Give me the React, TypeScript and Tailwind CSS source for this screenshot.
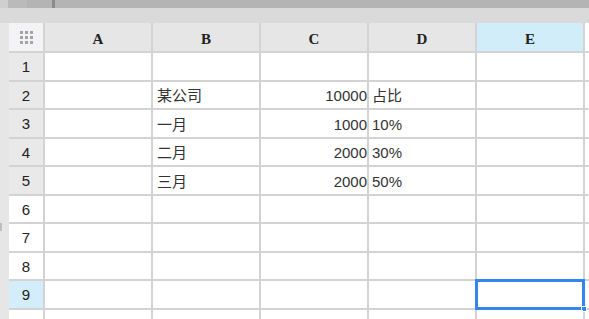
const cols = ["A", "B", "C", "D", "E"];

type Row = { n: number; cells: string[]; shade: string };

const rows: Row[] = [
  { n: 1, cells: ["", "", "", "", ""], shade: "bg-[#e9e9e9]" },
  { n: 2, cells: ["", "某公司", "10000", "占比", ""], shade: "bg-[#e9e9e9]" },
  { n: 3, cells: ["", "一月", "1000", "10%", ""], shade: "bg-[#e9e9e9]" },
  { n: 4, cells: ["", "二月", "2000", "30%", ""], shade: "bg-[#e9e9e9]" },
  { n: 5, cells: ["", "三月", "2000", "50%", ""], shade: "bg-[#e9e9e9]" },
  { n: 6, cells: ["", "", "", "", ""], shade: "bg-white" },
  { n: 7, cells: ["", "", "", "", ""], shade: "bg-white" },
  { n: 8, cells: ["", "", "", "", ""], shade: "bg-white" },
  { n: 9, cells: ["", "", "", "", ""], shade: "bg-[#d3eefa]" },
  { n: 10, cells: ["", "", "", "", ""], shade: "bg-white" },
];

const font = { fontFamily: '"Liberation Sans", "Noto Sans CJK SC", sans-serif' };

function GridDots() {
  return (
    <div className="grid grid-cols-3 gap-[2px]">
      {Array.from({ length: 9 }).map((_, i) => (
        <div key={i} className="w-[3px] h-[3px] bg-[#a3a3a3]" />
      ))}
    </div>
  );
}

export default function App() {
  return (
    <div className="w-[589px] h-[319px] overflow-hidden bg-[#e6e6e6] flex flex-col" style={font}>
      {/* window chrome */}
      <div className="h-[8px] shrink-0 bg-[#b4b4b4] flex">
        <div className="w-[8px] bg-[#cfcfcf]" />
        <div className="w-[19px] bg-[#bababa]" />
        <div className="w-[25px]" />
        <div className="w-[3px] bg-[#8c8c8c]" />
      </div>
      <div className="h-[15px] shrink-0 bg-[#dadada]" />

      <div className="flex flex-1 min-h-0">
        <div className="w-[9px] shrink-0 bg-[#e6e6e6] flex flex-col">
          <div className="h-[200px]" />
          <div className="w-[2px] h-[8px] bg-[#bdbdbd]" />
        </div>

        <div className="grid grid-cols-[34px_repeat(5,106px)_1fr] auto-rows-[26.5px] grid-rows-[28px] gap-[2px] bg-[#d3d3d3] flex-1 content-start">
          <div className="bg-[#f3f3f5] flex items-center justify-center">
            <GridDots />
          </div>
          {cols.map((c) => (
            <div
              key={c}
              className={`${c === "E" ? "bg-[#d1edfa]" : "bg-[#e6e6e6]"} flex items-center justify-center pt-[5px] text-[15px] font-bold text-[#222]`}
              style={{ fontFamily: '"Liberation Serif", serif' }}
            >
              {c}
            </div>
          ))}
          <div className="bg-white" />

          {rows.map((r) => (
            <Rowcells key={r.n} row={r} />
          ))}
        </div>
      </div>
    </div>
  );
}

function Rowcells({ row }: { row: Row }) {
  return (
    <>
      <div className={`${row.shade} flex items-center justify-center pt-[2px] text-[15px] text-[#222]`}>{row.n}</div>
      {row.cells.map((v, i) => {
        const numeric = /^\d+$/.test(v);
        const selected = row.n === 9 && i === 4;
        return (
          <div
            key={i}
            className={`relative bg-white flex items-center pt-[3px] text-[15px] text-[#333] ${numeric ? "justify-end pr-0" : i === 3 ? "pl-[3px]" : "pl-[4px]"}`}
          >
            {v}
            {selected && (
              <>
                <div className="absolute -left-[2px] -top-[2px] -right-[2px] -bottom-[2px] border-[3px] border-[#3385f0]" />
                <div className="absolute -right-[4px] -bottom-[4px] w-[6px] h-[6px] bg-[#3385f0] border border-white" />
              </>
            )}
          </div>
        );
      })}
      <div className="bg-white" />
    </>
  );
}
